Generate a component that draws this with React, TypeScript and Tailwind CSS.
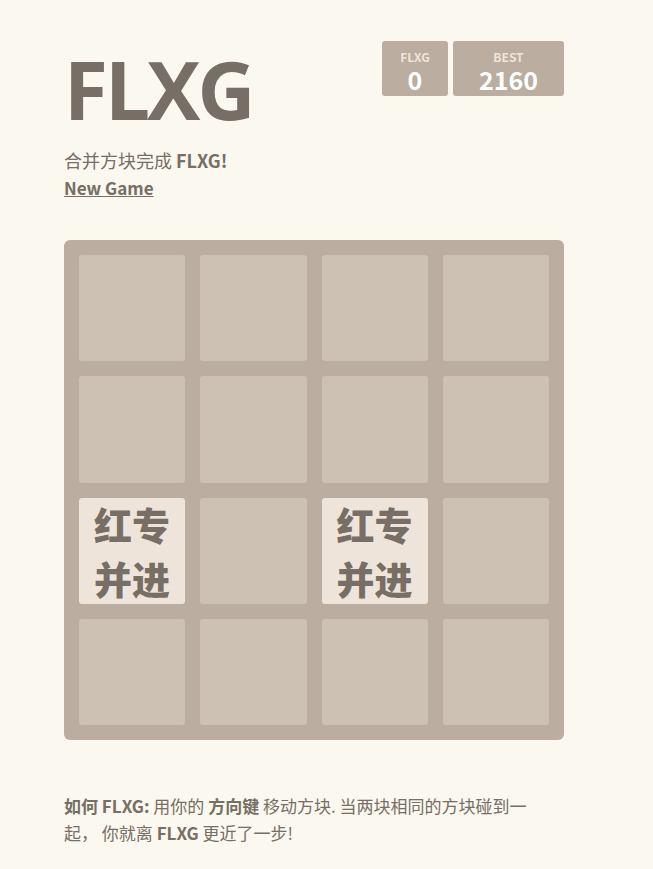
import React from 'react';

const font = { fontFamily: '"Noto Sans CJK SC", "Noto Sans", sans-serif' };
const titleFont = { fontFamily: '"Open Sans", "Noto Sans CJK SC", sans-serif' };

const board: (string | null)[][] = [
  [null, null, null, null],
  [null, null, null, null],
  ['红专并进', null, '红专并进', null],
  [null, null, null, null],
];

const ScoreBox: React.FC<{ label: string; value: string; wide?: boolean }> = ({ label, value, wide }) => (
  <div
    className={`bg-[#bbada0] rounded-[3px] h-[55px] flex flex-col items-center pt-[8px] ${
      wide ? 'w-[111px]' : 'w-[66px]'
    }`}
  >
    <span className="text-[12px] leading-[16px] font-bold uppercase text-[#eee4da]">{label}</span>
    <span className="text-[25px] leading-[28px] font-bold text-white">{value}</span>
  </div>
);

const Tile: React.FC<{ text: string | null }> = ({ text }) =>
  text ? (
    <div className="bg-[#eee4da] rounded-[3px] flex flex-col items-center justify-center text-[38px] leading-[54px] font-black text-[#776e65]">
      <span>{text.slice(0, 2)}</span>
      <span>{text.slice(2)}</span>
    </div>
  ) : (
    <div className="bg-[#cdc1b4] rounded-[3px]" />
  );

export default function App() {
  return (
    <div className="min-h-[869px] bg-[#faf8ef] text-[#776e65]" style={font}>
      <div className="w-[500px] ml-[64px] pt-[41px] pb-8">
        {/* Heading */}
        <div className="flex justify-between items-start">
          <h1 className="text-[80px] leading-[80px] font-bold mt-[8px] tracking-[-3px]" style={titleFont}>
            FLXG
          </h1>
          <div className="flex gap-[5px]">
            <ScoreBox label="FLXG" value="0" />
            <ScoreBox label="BEST" value="2160" wide />
          </div>
        </div>

        {/* Intro */}
        <p className="mt-[17px] text-[18px] leading-[28px]">
          合并方块完成 <b>FLXG!</b>
        </p>
        <a className="block text-[17px] leading-[28px] font-bold underline cursor-pointer">New Game</a>

        {/* Board */}
        <div className="mt-[38px] bg-[#bbada0] rounded-[6px] p-[15px] w-[500px] h-[500px] grid grid-cols-4 grid-rows-4 gap-[15px]">
          {board.flat().map((t, i) => (
            <Tile key={i} text={t} />
          ))}
        </div>

        {/* Explanation */}
        <p className="mt-[52px] max-w-[480px] text-[17px] leading-[27px]">
          <b>如何 FLXG:</b> 用你的 <b>方向键</b> 移动方块. 当两块相同的方块碰到一起， 你就离 <b>FLXG</b> 更近了一步!
        </p>
      </div>
    </div>
  );
}
